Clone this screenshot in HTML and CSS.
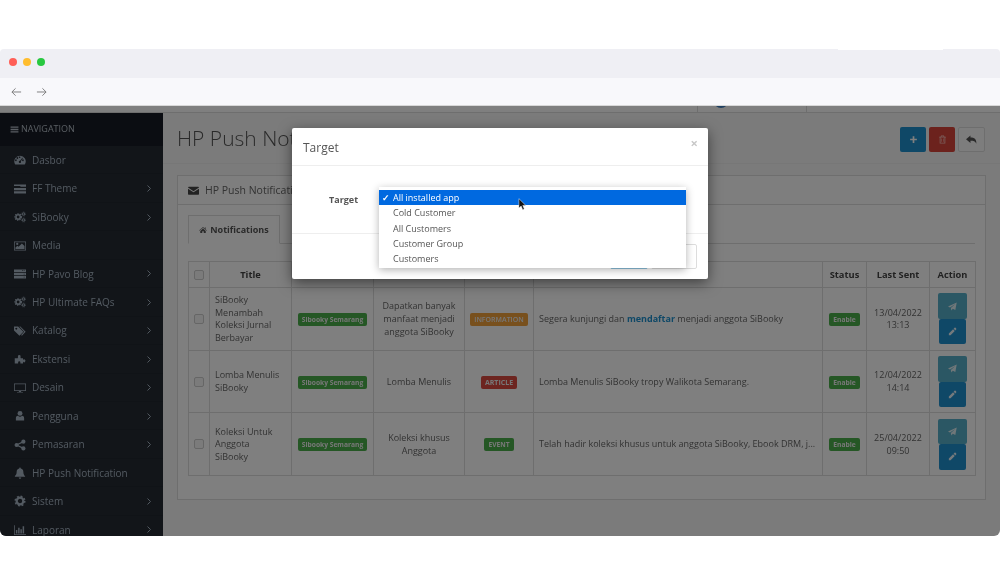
FILE: index.html

```html
<!DOCTYPE html>
<html lang="en">
<head>
    <meta charset="UTF-8">
    <meta name="viewport" content="width=device-width, initial-scale=1.0">
    <title>HP Push Notifications</title>
    <link rel="stylesheet" href="styles.css">
</head>
<body>
    <svg class="icon-defs" width="0" height="0">
        <symbol id="i-bars" viewBox="0 0 16 16"><path d="M1 2.5h14v2.4H1zM1 6.8h14v2.4H1zM1 11.1h14v2.4H1z"/></symbol>
        <symbol id="i-gauge" viewBox="0 0 16 16"><path fill-rule="evenodd" d="M8 2.2a7.6 7.6 0 0 1 6.6 11.4l-.5.4H1.900l-.5-.4A7.6 7.600 0 0 1 8 2.200zM3.600 8.300a1.100 1.100 0 1 0 0 .1zM5.600 5.300a1.100 1.100 0 1 0 0 .1zM8.600 4.300a1 1 0 1 0 0 .1zM13 8.300a1.100 1.100 0 1 0 0 .1zM11.100 5l-3 4a1.500 1.500 0 1 0 1 .6l2.800-4.200z"/></symbol>
        <symbol id="i-rows" viewBox="0 0 16 16"><path d="M0 2h16v3H8.500v-1H0zM0 6.500h16v3H0zM0 11h16v3H0zM9 3h5v1H9z"/></symbol>
        <symbol id="i-server" viewBox="0 0 16 16"><path fill-rule="evenodd" d="M0 2h16v3.400H0zM0 6.300h16v3.400H0zM0 10.600h16V14H0zM11 3v1h1V3zM13 3v1h1V3zM13 7.500v1h1v-1zM13 11.800v1h1v-1z"/></symbol>
        <symbol id="i-cogs" viewBox="0 0 16 16">
            <g fill="none" stroke="currentColor">
                <circle cx="5.500" cy="8" r="2.900" stroke-width="2"/>
                <circle cx="5.500" cy="8" r="4.400" stroke-width="1.500" stroke-dasharray="1.700 1.500"/>
                <circle cx="12.700" cy="4" r="1.500" stroke-width="1.300"/>
                <circle cx="12.700" cy="4" r="2.700" stroke-width="1" stroke-dasharray="1 1.120"/>
                <circle cx="12.700" cy="12" r="1.500" stroke-width="1.300"/>
                <circle cx="12.700" cy="12" r="2.700" stroke-width="1" stroke-dasharray="1 1.120"/>
            </g>
        </symbol>
        <symbol id="i-image" viewBox="0 0 16 16"><path fill-rule="evenodd" d="M0 2h16v12H0zM1 3v10h14V3z"/><path d="M2 12V10l2.500-2.500 1.500 1.500 4.500-4.500L14 8v4z"/><circle cx="4.300" cy="5.300" r="1.500"/></symbol>
        <symbol id="i-tags" viewBox="0 0 16 16"><path fill-rule="evenodd" d="M0 2h5.500l7 7-5.200 5.200-7.300-7zM3 3.500a1.300 1.300 0 1 0 .1 0z"/><path d="M7 2h1.500l7 7-5 5.200-1-1L13.500 9z"/></symbol>
        <symbol id="i-puzzle" viewBox="0 0 16 16"><path d="M1 7h4a1.500 1.500 0 0 1 .5-1.500A1.800 1.800 0 1 1 8.500 5.500 1.500 1.500 0 0 1 9 7h3v2.300a1.500 1.500 0 1 1 3 1.700 1.500 1.500 0 0 1-3 0V14H8.500v-1.500a1.400 1.400 0 0 0-3 0V14H1z"/></symbol>
        <symbol id="i-desktop" viewBox="0 0 16 16"><path fill-rule="evenodd" d="M0 2h16v10H9.500v1.200H12V14H4v-.8h2.500V12H0zM1 3v8h14V3z"/></symbol>
        <symbol id="i-user" viewBox="0 0 16 16"><circle cx="8" cy="4.500" r="3.300"/><path d="M2.500 14v-3.500C2.500 8.800 4 8 5.300 7.800a4.200 4.200 0 0 0 5.400 0c1.300.2 2.800 1 2.800 2.700V14z"/></symbol>
        <symbol id="i-share" viewBox="0 0 16 16"><circle cx="3.500" cy="8" r="2.800"/><circle cx="12.500" cy="3.500" r="2.800"/><circle cx="12.500" cy="12.500" r="2.800"/><path d="M3.500 8l9-4.500M3.500 8l9 4.500" stroke="currentColor" stroke-width="1.500"/></symbol>
        <symbol id="i-bell" viewBox="0 0 16 16"><path d="M8 .8a1.100 1.100 0 0 1 1 1.300c2.500.5 3.500 2.300 3.500 4.900 0 2.500 1 4 2.300 5.200v.8H1.200V12C2.500 10.800 3.500 9.500 3.500 7c0-2.600 1-4.400 3.500-4.900A1.100 1.100 0 0 1 8 .8zM6.300 14h3.400a1.700 1.700 0 0 1-3.400 0z"/></symbol>
        <symbol id="i-cog" viewBox="0 0 16 16">
            <circle cx="8" cy="8" r="4.400" fill="none" stroke="currentColor" stroke-width="3"/>
            <circle cx="8" cy="8" r="6.400" fill="none" stroke="currentColor" stroke-width="2" stroke-dasharray="2.500 2.530"/>
        </symbol>
        <symbol id="i-chart" viewBox="0 0 16 16"><path d="M0 1.500h1V13.500h15v1H0zM2.500 8h2v4.500h-2zM5.500 5h2v7.500h-2zM8.500 7h2v5.500h-2zM11.500 3h2v9.500h-2z"/></symbol>
        <symbol id="i-chevron" viewBox="0 0 8 12"><path d="M2 2l4 4-4 4" fill="none" stroke="currentColor" stroke-width="1.300"/></symbol>
        <symbol id="i-envelope" viewBox="0 0 16 16"><path d="M0 3.500A1.300 1.300 0 0 1 1.300 2.500h13.400A1.300 1.300 0 0 1 16 3.800L8 9 0 3.800zM0 5.500V13a1 1 0 0 0 1 1h14a1 1 0 0 0 1-1V5.500l-8 5.200z"/></symbol>
        <symbol id="i-home" viewBox="0 0 16 16"><path d="M8 2l8 6.800-.8.900L8 3.700.8 9.700 0 8.800zM2.500 9.800L8 5l5.500 4.800V14H9.500v-3.500h-3V14h-4zM11.500 3h2v3.200l-2-1.700z"/></symbol>
        <symbol id="i-plus" viewBox="0 0 16 16"><path d="M6.500 2h3v4.500H14v3H9.500V14h-3V9.500H2v-3h4.500z"/></symbol>
        <symbol id="i-trash" viewBox="0 0 16 16"><path fill-rule="evenodd" d="M5.500 1h5l1 2H14v1.400h-1V15H3V4.400H2V3h2.500zM6.500 2.400L6.200 3h3.600l-.3-.6zM4.500 4.400v9.200h7V4.400zM6 6h1v6H6zM9 6h1v6H9z"/></symbol>
        <symbol id="i-reply" viewBox="0 0 16 16"><path d="M6.500 2v3.200C12 5.200 15.500 7.500 15 14c-1.300-3.500-4-4.300-8.500-4.300V13L0 7.500z"/></symbol>
        <symbol id="i-plane" viewBox="0 0 16 16"><path d="M15.500 1L13 14l-4.500-2-2.500 3-1-4.500L13 3.500 3.500 9.800 0 8.200z"/></symbol>
        <symbol id="i-pencil" viewBox="0 0 16 16"><path d="M11.500 1.500a1.500 1.500 0 0 1 2 0l1 1a1.500 1.500 0 0 1 0 2L13 6 10 3zM9 4l3 3-7.500 7.500H1.500v-3z"/></symbol>
    </svg>

    <div class="window">
        <div class="titlebar">
            <span class="dot dot-red"></span>
            <span class="dot dot-yellow"></span>
            <span class="dot dot-green"></span>
            <span class="tab-sliver"></span>
        </div>
        <div class="toolbar">
            <svg class="arrow" viewBox="0 0 12 10"><path d="M11 5H1M5 1L1 5l4 4"/></svg>
            <svg class="arrow" viewBox="0 0 12 10"><path d="M1 5h10M7 1l4 4-4 4"/></svg>
        </div>

        <div class="page">
            <div class="topbar">
                <span class="topbar-cell"><span class="avatar"></span></span>
                <span class="topbar-cell"></span>
            </div>
            <div class="layout">
                <nav class="sidebar">
                    <div class="nav-title"><svg class="nav-bars"><use href="#i-bars"/></svg>NAVIGATION</div>
                    <ul class="nav-list">
                        <li><svg class="ico"><use href="#i-gauge"/></svg><span>Dasbor</span></li>
                        <li><svg class="ico"><use href="#i-rows"/></svg><span>FF Theme</span><svg class="chev"><use href="#i-chevron"/></svg></li>
                        <li><svg class="ico"><use href="#i-cogs"/></svg><span>SiBooky</span><svg class="chev"><use href="#i-chevron"/></svg></li>
                        <li><svg class="ico"><use href="#i-image"/></svg><span>Media</span></li>
                        <li><svg class="ico"><use href="#i-server"/></svg><span>HP Pavo Blog</span><svg class="chev"><use href="#i-chevron"/></svg></li>
                        <li><svg class="ico"><use href="#i-cogs"/></svg><span>HP Ultimate FAQs</span><svg class="chev"><use href="#i-chevron"/></svg></li>
                        <li><svg class="ico"><use href="#i-tags"/></svg><span>Katalog</span><svg class="chev"><use href="#i-chevron"/></svg></li>
                        <li><svg class="ico"><use href="#i-puzzle"/></svg><span>Ekstensi</span><svg class="chev"><use href="#i-chevron"/></svg></li>
                        <li><svg class="ico"><use href="#i-desktop"/></svg><span>Desain</span><svg class="chev"><use href="#i-chevron"/></svg></li>
                        <li><svg class="ico"><use href="#i-user"/></svg><span>Pengguna</span><svg class="chev"><use href="#i-chevron"/></svg></li>
                        <li><svg class="ico"><use href="#i-share"/></svg><span>Pemasaran</span><svg class="chev"><use href="#i-chevron"/></svg></li>
                        <li><svg class="ico"><use href="#i-bell"/></svg><span>HP Push Notification</span></li>
                        <li><svg class="ico"><use href="#i-cog"/></svg><span>Sistem</span><svg class="chev"><use href="#i-chevron"/></svg></li>
                        <li><svg class="ico"><use href="#i-chart"/></svg><span>Laporan</span><svg class="chev"><use href="#i-chevron"/></svg></li>
                    </ul>
                </nav>

                <main class="content">
                    <div class="page-header">
                        <h1>HP Push Notifications</h1>
                        <div class="page-actions">
                            <button class="btn btn-primary"><svg class="btn-ico"><use href="#i-plus"/></svg></button>
                            <button class="btn btn-danger"><svg class="btn-ico"><use href="#i-trash"/></svg></button>
                            <button class="btn btn-default"><svg class="btn-ico"><use href="#i-reply"/></svg></button>
                        </div>
                    </div>

                    <section class="panel">
                        <div class="panel-heading"><svg class="panel-ico"><use href="#i-envelope"/></svg>HP Push Notifications</div>
                        <div class="panel-body">
                            <div class="tabs">
                                <div class="tab"><svg class="tab-ico"><use href="#i-home"/></svg>Notifications</div>
                            </div>
                            <table class="data-table">
                                <colgroup>
                                    <col class="col-check"><col class="col-title"><col class="col-store"><col class="col-desc">
                                    <col class="col-type"><col class="col-msg"><col class="col-status"><col class="col-sent"><col class="col-action">
                                </colgroup>
                                <thead>
                                    <tr>
                                        <th><span class="check"></span></th>
                                        <th>Title</th>
                                        <th>Store</th>
                                        <th>Content</th>
                                        <th>Label</th>
                                        <th>Detail</th>
                                        <th>Status</th>
                                        <th>Last Sent</th>
                                        <th>Action</th>
                                    </tr>
                                </thead>
                                <tbody>
                                    <tr>
                                        <td class="center"><span class="check"></span></td>
                                        <td class="title-cell">SiBooky Menambah Koleksi Jurnal Berbayar</td>
                                        <td class="center"><span class="label label-green">Sibooky Semarang</span></td>
                                        <td class="center">Dapatkan banyak manfaat menjadi anggota SiBooky</td>
                                        <td class="center"><span class="label label-orange">INFORMATION</span></td>
                                        <td class="msg">Segera kunjungi dan <a class="link">mendaftar</a> menjadi anggota SiBooky</td>
                                        <td class="center"><span class="label label-green">Enable</span></td>
                                        <td class="center">13/04/2022 13:13</td>
                                        <td class="center actions">
                                            <button class="act act-send"><svg class="act-ico"><use href="#i-plane"/></svg></button>
                                            <button class="act act-edit"><svg class="act-ico"><use href="#i-pencil"/></svg></button>
                                        </td>
                                    </tr>
                                    <tr>
                                        <td class="center"><span class="check"></span></td>
                                        <td class="title-cell">Lomba Menulis SiBooky</td>
                                        <td class="center"><span class="label label-green">Sibooky Semarang</span></td>
                                        <td class="center">Lomba Menulis</td>
                                        <td class="center"><span class="label label-red">ARTICLE</span></td>
                                        <td class="msg">Lomba Menulis SiBooky tropy Walikota Semarang.</td>
                                        <td class="center"><span class="label label-green">Enable</span></td>
                                        <td class="center">12/04/2022 14:14</td>
                                        <td class="center actions">
                                            <button class="act act-send"><svg class="act-ico"><use href="#i-plane"/></svg></button>
                                            <button class="act act-edit"><svg class="act-ico"><use href="#i-pencil"/></svg></button>
                                        </td>
                                    </tr>
                                    <tr>
                                        <td class="center"><span class="check"></span></td>
                                        <td class="title-cell">Koleksi Untuk Anggota SiBooky</td>
                                        <td class="center"><span class="label label-green">Sibooky Semarang</span></td>
                                        <td class="center">Koleksi khusus Anggota</td>
                                        <td class="center"><span class="label label-green">EVENT</span></td>
                                        <td class="msg">Telah hadir koleksi khusus untuk anggota SiBooky, Ebook DRM, j...</td>
                                        <td class="center"><span class="label label-green">Enable</span></td>
                                        <td class="center">25/04/2022 09:50</td>
                                        <td class="center actions">
                                            <button class="act act-send"><svg class="act-ico"><use href="#i-plane"/></svg></button>
                                            <button class="act act-edit"><svg class="act-ico"><use href="#i-pencil"/></svg></button>
                                        </td>
                                    </tr>
                                </tbody>
                            </table>
                        </div>
                    </section>
                </main>
            </div>

            <div class="backdrop"></div>

            <div class="modal">
                <div class="modal-header">
                    <h4>Target</h4>
                    <span class="modal-close">×</span>
                </div>
                <div class="modal-body">
                    <label class="modal-label">Target</label>
                    <div class="select-box"></div>
                </div>
                <div class="modal-footer">
                    <button class="foot-btn foot-primary">Send</button>
                    <button class="foot-btn foot-default">Close</button>
                </div>

                <ul class="dropdown">
                    <li class="selected"><span class="tick">✓</span>All installed app</li>
                    <li>Cold Customer</li>
                    <li>All Customers</li>
                    <li>Customer Group</li>
                    <li>Customers</li>
                </ul>
                <svg class="cursor" viewBox="0 0 10 14"><path d="M1 .5v10.500l2.500-2.300 1.700 4 1.800-.8-1.700-3.900h3.300z"/></svg>
            </div>
        </div>
    </div>
</body>
</html>
```

FILE: styles.css

```css
* {
    box-sizing: border-box;
}

html, body {
    margin: 0;
    height: 585px;
    overflow: hidden;
    background-color: #fff;
}

body {
    font-family: "Open Sans", "Liberation Sans", sans-serif;
    font-size: 10px;
    line-height: 12.8px;
    color: #555;
    padding-top: 49px;
}

.icon-defs {
    position: absolute;
}

svg {
    fill: currentColor;
}

/* the shot is a scaled down capture, so everything is a bit soft */
.window {
    height: 487px;
    border-radius: 4px 4px 6px 6px;
    overflow: hidden;
    display: flex;
    flex-direction: column;
    filter: blur(0.3px);
}

.titlebar {
    position: relative;
    height: 29px;
    background-color: #efeff4;
    display: flex;
    align-items: center;
    gap: 6px;
    padding: 0 9px 3px;
}

.tab-sliver {
    position: absolute;
    left: 838px;
    top: 0;
    width: 105px;
    height: 1px;
    background-color: #fff;
    box-shadow: 0 -1px 0 #ccc;
}

.dot {
    width: 8px;
    height: 8px;
    border-radius: 50%;
}

.dot-red { background-color: #ff5f57; }
.dot-yellow { background-color: #ffbd2e; }
.dot-green { background-color: #28c840; }

.toolbar {
    height: 28px;
    background-color: #f8f8fb;
    border-bottom: 1px solid #d8d8d8;
    display: flex;
    align-items: center;
    gap: 14px;
    padding: 1px 11px 0;
}

.arrow {
    width: 11px;
    height: 10px;
    fill: none;
    stroke: #777;
    stroke-width: 1;
}

.page {
    position: relative;
    flex: 1;
    min-height: 0;
    overflow: hidden;
    background-color: #f6f6f6;
}

.topbar {
    height: 7px;
    background-color: #fff;
    border-bottom: 1px solid #ddd;
    display: flex;
    justify-content: flex-end;
    padding-right: 85px;
}

.topbar-cell {
    width: 109px;
    border-left: 1px solid #ddd;
    position: relative;
}

.avatar {
    position: absolute;
    left: 15px;
    top: -15px;
    width: 16px;
    height: 17px;
    border-radius: 50%;
    background-color: #3f7fc0;
}

.layout {
    display: flex;
    height: 423px;
}

.sidebar {
    width: 163px;
    flex-shrink: 0;
    background-color: #242a33;
    color: #a6b4c2;
    font-size: 10px;
}

.nav-title {
    height: 33px;
    background-color: #161b24;
    color: #b4bcc6;
    font-size: 9px;
    display: flex;
    align-items: center;
    padding-left: 10px;
}

.nav-bars {
    width: 9px;
    height: 9px;
    margin-right: 2px;
}

.nav-list {
    list-style: none;
    margin: 0;
    padding: 0;
}

.nav-list li {
    height: 28.450px;
    display: flex;
    align-items: center;
    padding-left: 14px;
    padding-top: 1px;
    border-bottom: 1px solid #20262e;
}

.ico {
    width: 12px;
    height: 12px;
    margin-right: 6px;
    flex-shrink: 0;
}

.chev {
    width: 6px;
    height: 9px;
    margin-left: auto;
    margin-right: 11px;
}

.content {
    flex: 1;
    min-width: 0;
    padding: 0 14px;
}

.page-header {
    height: 51px;
    margin: 0 -14px 11px;
    padding: 0 15px 0 14px;
    border-bottom: 1px solid #efefef;
    display: flex;
    align-items: flex-start;
    justify-content: space-between;
}

.page-header h1 {
    margin: 11px 0 0 0;
    font-size: 21px;
    line-height: 28px;
    font-weight: 300;
    color: #555;
}

.page-actions {
    display: flex;
    gap: 3px;
    margin-top: 14px;
}

.btn {
    width: 26px;
    height: 25px;
    padding: 0;
    border-radius: 2px;
    border: 1px solid transparent;
    display: flex;
    align-items: center;
    justify-content: center;
}

.btn-ico {
    width: 9px;
    height: 9px;
}

.btn-primary { background-color: #1e91cf; color: #fff; }
.btn-danger { background-color: #d9453a; color: #f4b9b4; }
.btn-default { background-color: #fbfbfb; color: #555; border-color: #ddd; width: 27px; }
.btn-default .btn-ico { width: 11px; height: 11px; }

.panel {
    height: 325px;
    background-color: #fff;
    border: 1px solid #ddd;
}

.panel-heading {
    height: 29px;
    background-color: #fcfcfc;
    border-bottom: 1px solid #ddd;
    display: flex;
    align-items: center;
    padding-left: 10px;
    font-size: 10.500px;
    color: #666;
}

.panel-ico {
    width: 11px;
    height: 11px;
    margin-right: 6px;
    color: #444;
}

.panel-body {
    padding: 10px;
}

.tabs {
    height: 29px;
    border-bottom: 1px solid #ddd;
    margin-bottom: 17px;
}

.tab {
    width: 92px;
    height: 29px;
    border: 1px solid #ddd;
    border-bottom-color: #fff;
    background-color: #fff;
    padding-top: 1px;
    display: flex;
    align-items: center;
    justify-content: center;
    font-weight: 700;
    font-size: 9px;
    color: #555;
}

.tab-ico {
    width: 8px;
    height: 8px;
    margin-right: 3px;
}

.data-table {
    width: 787px;
    table-layout: fixed;
    border-collapse: collapse;
}

.col-check { width: 21px; }
.col-title { width: 82px; }
.col-store { width: 82px; }
.col-desc { width: 91px; }
.col-type { width: 69px; }
.col-msg { width: 289px; }
.col-status { width: 44px; }
.col-sent { width: 63px; }
.col-action { width: 46px; }

.data-table th, .data-table td {
    border: 1px solid #ddd;
    padding: 1px 5px 0;
    vertical-align: middle;
}

.data-table th {
    height: 26px;
    text-align: center;
    font-size: 9.300px;
    color: #444;
    white-space: nowrap;
}

.data-table td {
    height: 62.700px;
    color: #666;
    font-size: 9px;
}

.data-table td.center {
    text-align: center;
}

.data-table td.title-cell {
    padding-right: 10px;
}

.data-table td:first-child, .data-table th:first-child {
    padding: 0;
}

.msg {
    white-space: nowrap;
    overflow: hidden;
}

.link {
    color: #1e91cf;
    font-weight: 700;
}

.check {
    display: block;
    width: 10px;
    height: 10px;
    margin: 0 auto;
    border: 1px solid #ccc;
    border-radius: 2px;
    background-color: #f6f6f6;
}

.label {
    display: inline-block;
    padding: 0 4px;
    height: 13px;
    line-height: 13px;
    border-radius: 2px;
    color: #eee;
    font-size: 6.700px;
    font-weight: 700;
    white-space: nowrap;
    vertical-align: middle;
}

.label-green { background-color: #4aae4a; }
.label-orange { background-color: #f0a03a; font-size: 7px; font-weight: 600; }
.label-red { background-color: #da4a40; font-size: 7px; }

.data-table td.actions {
    padding: 0;
}

.act {
    display: block;
    padding: 0;
    border: 0;
    border-radius: 2px;
    height: 25.500px;
}

.act-send {
    width: 29px;
    margin-left: 7.500px;
    background-color: #56afc8;
    color: #dfeef3;
}

.act-edit {
    width: 27px;
    margin-left: 8.500px;
    background-color: #1e91cf;
    color: #e6f2f9;
}

.act-ico {
    display: block;
    margin: 0 auto;
    width: 9px;
    height: 9px;
}

.backdrop {
    position: absolute;
    inset: 0;
    background-color: rgba(0, 0, 0, 0.5);
}

.modal {
    position: absolute;
    left: 292px;
    top: 22px;
    width: 416px;
    height: 151px;
    background-color: #fff;
    border-radius: 2px;
    box-shadow: 0 4px 14px rgba(0, 0, 0, 0.5);
}

.modal-header {
    height: 38px;
    border-bottom: 1px solid #eee;
    display: flex;
    align-items: center;
    justify-content: space-between;
    padding: 3px 11px 0;
}

.modal-header h4 {
    margin: 0;
    font-size: 12px;
    font-weight: 400;
    color: #555;
}

.modal-close {
    font-size: 13px;
    font-weight: 700;
    color: #c8c8c8;
    margin-top: -9px;
    margin-right: -1px;
}

.modal-body {
    height: 68px;
    border-bottom: 1px solid #eee;
    display: flex;
    align-items: flex-start;
    padding-left: 37px;
    padding-top: 28px;
}

.modal-label {
    font-weight: 700;
    font-size: 9px;
    color: #555;
}

.select-box {
    margin-left: 21px;
    width: 306px;
    height: 24px;
    margin-top: -7px;
    border: 1px solid #a9d0ee;
}

.modal-footer {
    height: 45px;
    display: flex;
    justify-content: flex-end;
    gap: 3px;
    padding: 10px 11px 0 0;
}

.foot-btn {
    height: 25px;
    font-family: inherit;
    font-size: 9.500px;
    border-radius: 2px;
    padding: 0;
}

.foot-primary {
    width: 38px;
    background-color: #8fc4e0;
    color: #fff;
    border: 1px solid #8fc4e0;
}

.foot-default {
    width: 46px;
    background-color: #fff;
    color: #555;
    border: 1px solid #ddd;
}

.dropdown {
    position: absolute;
    left: 87px;
    top: 59px;
    width: 307px;
    margin: 0;
    padding: 3px 0 2px;
    list-style: none;
    background-color: #fff;
    box-shadow: 0 2px 8px rgba(0, 0, 0, 0.3);
    font-size: 9px;
    color: #555;
}

.dropdown li {
    position: relative;
    height: 15.300px;
    line-height: 15.300px;
    padding-left: 14px;
}

.dropdown li.selected {
    background-color: #0069e0;
    color: #fff;
}

.tick {
    position: absolute;
    left: 3px;
    top: 0;
    font-weight: 700;
}

.cursor {
    position: absolute;
    left: 226px;
    top: 70px;
    width: 9px;
    height: 13px;
    fill: #111;
    stroke: #fff;
    stroke-width: 0.500;
}
```
